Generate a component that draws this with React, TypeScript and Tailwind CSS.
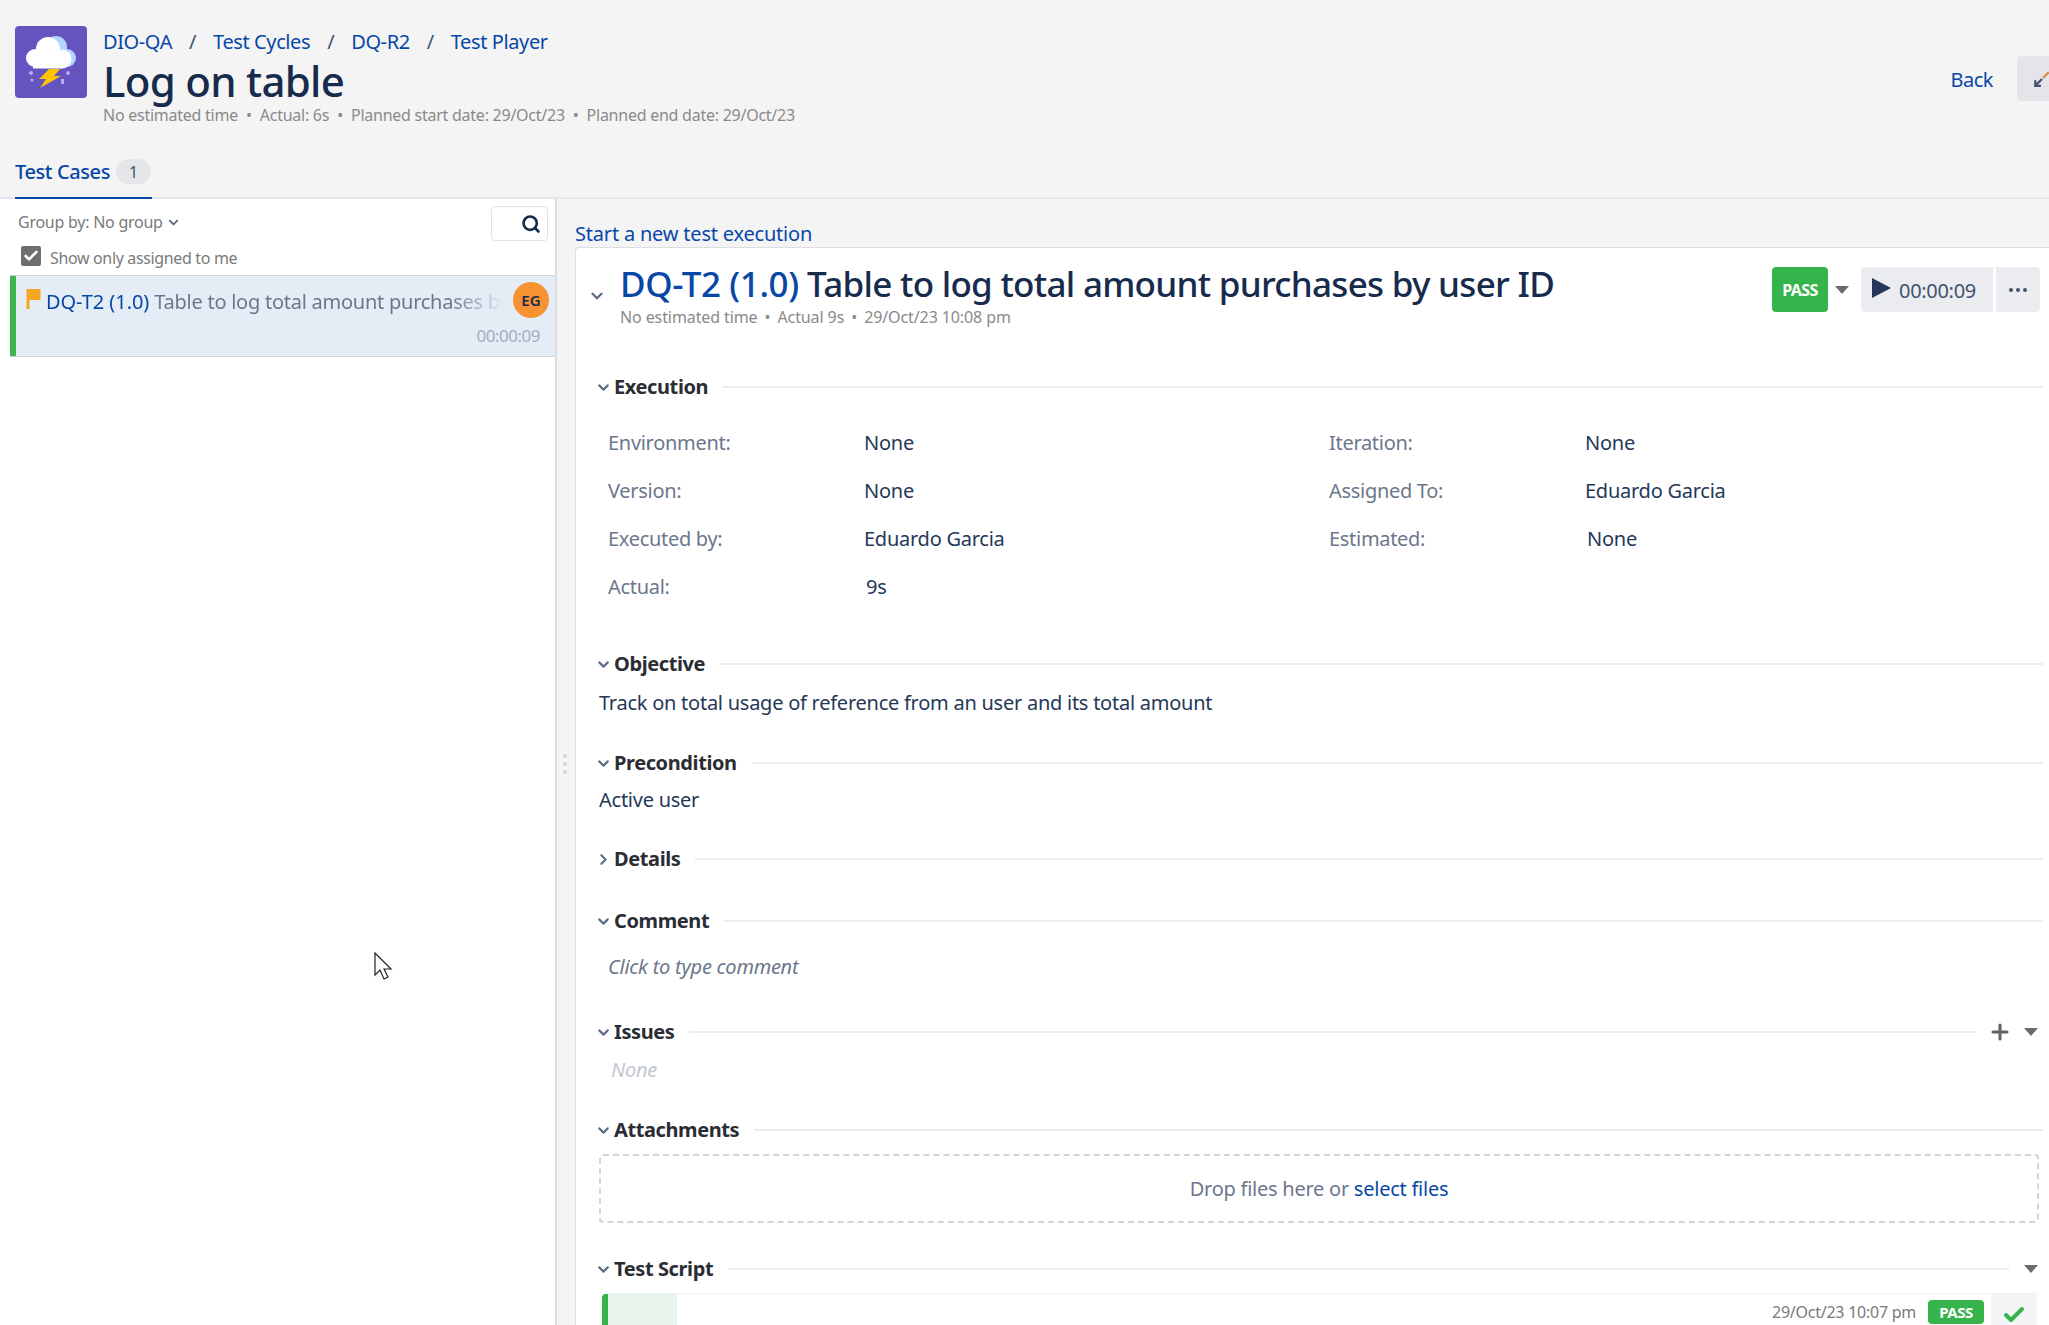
import { ChevronDown, ChevronRight, Plus, Search, Check } from "lucide-react";

const font = "font-['Noto_Sans','Open_Sans',sans-serif]";
const body = "text-[20px] leading-[26px] tracking-[-0.25px]";

function Logo() {
  return (
    <svg viewBox="0 0 72 72" className="h-[72px] w-[72px] shrink-0">
      <rect width="72" height="72" rx="4" fill="#6554c0" />
      <g fill="#b3d4ff">
        <circle cx="41" cy="21" r="11" />
        <circle cx="52" cy="32" r="9" />
      </g>
      <g fill="#ffffff">
        <circle cx="20" cy="32" r="9" />
        <circle cx="33" cy="23" r="12" />
        <circle cx="47" cy="33" r="9.500" />
        <rect x="18" y="30" width="30" height="12.500" />
      </g>
      <path d="M34 43h11l-6 7h7L25 62l6-9h-7z" fill="#ffc400" />
      <circle cx="16" cy="47" r="2" fill="#b8acf6" />
      <circle cx="17" cy="54" r="1.500" fill="#b8acf6" />
      <circle cx="53" cy="47" r="2" fill="#b8acf6" />
      <path d="M46 53h3v5h-3z" fill="#b8acf6" />
    </svg>
  );
}

function SectionHead({
  title,
  open = true,
  right,
}: {
  title: string;
  open?: boolean;
  right?: React.ReactNode;
}) {
  const Icon = open ? ChevronDown : ChevronRight;
  return (
    <div className="flex h-6 items-center">
      <Icon size={17} strokeWidth={3} className="-ml-[4px] shrink-0 text-[#5e6c84]" />
      <span className="ml-[2px] text-[20px] leading-6 font-bold tracking-[-0.4px] text-[#2a2d34]">{title}</span>
      <div className="ml-[15px] h-[2px] flex-1 bg-[#ebecf0]" />
      {right}
    </div>
  );
}

function Caret() {
  return <div className="h-0 w-0 border-x-[7px] border-t-[8px] border-x-transparent border-t-[#6b6b6b]" />;
}

function Field({ label, value, valueClass = "" }: { label: string; value: string; valueClass?: string }) {
  return (
    <div className="flex h-12 items-center">
      <span className="w-[256px] text-[20px] tracking-[-0.3px] text-[#6b778c]">{label}</span>
      <span className={`text-[20px] tracking-[-0.25px] text-[#253858] ${valueClass}`}>{value}</span>
    </div>
  );
}

export default function App() {
  return (
    <div className={`${font} flex h-screen w-full flex-col overflow-hidden bg-[#f4f4f5]`}>
      {/* header */}
      <header className="flex h-[199px] shrink-0 flex-col border-b-2 border-[#e6e7ea]">
        <div className="flex items-start pt-[26px] pl-[15px]">
          <Logo />
          <div className="ml-[16px] min-w-0 flex-1">
            <div className="flex h-[32px] items-center text-[20px] tracking-[-0.4px] text-[#0747a6]">
              <span>DIO-QA</span>
              <span className="mx-[17px] text-[#42526e]">/</span>
              <span>Test Cycles</span>
              <span className="mx-[17px] text-[#42526e]">/</span>
              <span>DQ-R2</span>
              <span className="mx-[17px] text-[#42526e]">/</span>
              <span>Test Player</span>
            </div>
            <h1 className="h-[46px] text-[42px] leading-[46px] font-medium tracking-[-0.7px] text-[#172b4d]">Log on table</h1>
            <div className="mt-[1px] flex items-center text-[16px] leading-5 tracking-[-0.25px] text-[#8a8a8a]">
              <span>No estimated time</span>
              <span className="mx-[8px]">•</span>
              <span>Actual: 6s</span>
              <span className="mx-[8px]">•</span>
              <span>Planned start date: 29/Oct/23</span>
              <span className="mx-[8px]">•</span>
              <span>Planned end date: 29/Oct/23</span>
            </div>
          </div>
          <div className="mt-[30px] -mr-[15px] flex items-center">
            <span className="mt-[2px] text-[20px] tracking-[-0.5px] text-[#0747a6]">Back</span>
            <div className="ml-6 flex h-[45px] w-[47px] items-center rounded-[4px] bg-[#e4e5e9] pl-[16px]">
              <svg viewBox="0 0 16 16" className="h-[18px] w-[18px]" fill="none" stroke="#42526e" strokeWidth="2">
                <path d="M8 8 2 14M2 9v5h5" />
                <path d="M9 7l5-5" stroke="#d98b4a" />
              </svg>
            </div>
          </div>
        </div>
        <div className="mt-[21px] flex">
          <div className="ml-[15px] flex h-[54px] w-[137px] items-start border-b-[3px] border-[#0747a6] pt-[13px]">
            <span className="text-[20px] leading-[26px] font-medium tracking-[-0.4px] text-[#0747a6]">Test Cases</span>
            <span className="ml-[6px] flex h-[25px] w-[35px] items-center justify-center rounded-full bg-[#e4e6ea] text-[16px] text-[#42526e]">1</span>
          </div>
        </div>
      </header>

      <div className="flex min-h-0 flex-1">
        {/* left panel */}
        <aside className="w-[557px] shrink-0 border-r-2 border-[#dcdcdc] bg-white">
          <div className="flex h-[76px]">
            <div className="flex-1 pt-[12px] pl-[18px]">
              <div className="flex h-[22px] items-center text-[16px] tracking-[-0.25px] text-[#7a7a7a]">
                Group by: No group
                <ChevronDown size={15} strokeWidth={3} className="ml-[3px] text-[#5e6c84]" />
              </div>
              <div className="mt-[10px] flex items-center pl-[3px]">
                <div className="flex h-5 w-5 items-center justify-center rounded-[2px] bg-[#6e6e6e]">
                  <Check size={16} strokeWidth={4} className="text-white" />
                </div>
                <span className="mt-[5px] ml-[9px] text-[16px] leading-5 tracking-[-0.35px] text-[#7a7a7a]">Show only assigned to me</span>
              </div>
            </div>
            <div className="mt-[7px] mr-[7px] flex h-[35px] w-[57px] items-center justify-end rounded-[4px] border border-[#dfe1e6] pr-[6px]">
              <Search size={20} strokeWidth={3.2} className="text-[#172b4d]" />
            </div>
          </div>
          <div className="ml-[10px] flex h-[82px] border-y border-[#cfd3d8] bg-[#e4ecf6]">
            <div className="w-[6px] bg-[#3db650]" />
            <div className="relative min-w-0 flex-1 pt-[12px] pl-[10px]">
              <div className="flex items-center">
                <svg viewBox="0 0 14 20" className="-mt-[6px] h-[20px] w-[15px] shrink-0">
                  <path d="M0 0h14v11H3v9H0z" fill="#f6a623" />
                </svg>
                <div className="ml-[5px] w-[458px] overflow-hidden text-[20px] leading-7 tracking-[-0.25px] whitespace-nowrap [mask-image:linear-gradient(to_right,black_88%,transparent_100%)]">
                  <span className="tracking-[-0.05px] text-[#0747a6]">DQ-T2 (1.0)</span>
                  <span className="text-[#6b778c]"> Table to log total amount purchases by user ID</span>
                </div>
              </div>
              <div className="absolute top-[6px] right-[6px] flex h-9 w-9 items-center justify-center rounded-full bg-[#f79232] text-[15px] font-semibold text-[#172b4d]">EG</div>
              <div className="absolute right-[15px] bottom-[8px] text-[17px] tracking-[-0.5px] text-[#a5adba]">00:00:09</div>
            </div>
          </div>
          {/* mouse pointer from the capture */}
          <svg viewBox="0 0 20 28" className="mt-[595px] ml-[374px] h-7 w-5">
            <path d="M1 1v22l5-5 4 9 4-2-4-8h7z" fill="#fff" stroke="#222" strokeWidth="1.200" />
          </svg>
        </aside>

        {/* splitter */}
        <div className="flex w-[18px] shrink-0 flex-col items-start pt-[555px] pl-[6px]">
          <div className="flex flex-col gap-[4px]">
            <div className="h-[4px] w-[4px] rounded-full bg-[#d4d6da]" />
            <div className="h-[4px] w-[4px] rounded-full bg-[#d4d6da]" />
            <div className="h-[4px] w-[4px] rounded-full bg-[#d4d6da]" />
          </div>
        </div>

        {/* main */}
        <main className="min-w-0 flex-1 pt-[21px]">
          <div className="h-[27px] text-[20px] leading-[27px] tracking-[-0.2px] text-[#0747a6]">Start a new test execution</div>
          <section className="h-[1200px] rounded-tl-[4px] border-t border-l border-[#dcdde0] bg-white pr-[6px] pl-[23px]">
            {/* title row */}
            <div className="flex h-[97px] items-start">
              <ChevronDown size={18} strokeWidth={3} className="mt-[39px] -ml-[11px] text-[#5e6c84]" />
              <div className="ml-[14px] pt-[12px]">
                <h2 className="text-[35px] leading-[48px] font-medium tracking-[-0.72px] text-[#172b4d]">
                  <span className="tracking-[-0.4px] text-[#0747a6]">DQ-T2 (1.0)</span> Table to log total amount purchases by user ID
                </h2>
                <div className="-mt-[1px] flex items-center text-[16px] leading-5 tracking-[-0.1px] text-[#8a8a8a]">
                  <span>No estimated time</span>
                  <span className="mx-[7px]">•</span>
                  <span>Actual 9s</span>
                  <span className="mx-[7px]">•</span>
                  <span>29/Oct/23 10:08 pm</span>
                </div>
              </div>
              <div className="mt-[19px] ml-auto flex items-center">
                <div className="flex h-[45px] w-[56px] items-center justify-center rounded-[4px] bg-[#36b44c] text-[16px] font-bold tracking-[-0.6px] text-white">PASS</div>
                <div className="mr-[12px] ml-[7px]">
                  <Caret />
                </div>
                <div className="flex h-[45px] w-[132px] items-center rounded-l-[4px] bg-[#ebecf0] pl-[11px]">
                  <svg viewBox="0 0 20 20" className="mb-[4px] h-5 w-5">
                    <path d="M0 0l19 10L0 20z" fill="#253858" />
                  </svg>
                  <span className="mt-[2px] ml-[7px] text-[20px] tracking-[-0.3px] text-[#42526e]">00:00:09</span>
                </div>
                <div className="mr-[3px] ml-[3px] flex h-[45px] w-[44px] items-center justify-center gap-[3px] rounded-r-[4px] bg-[#ebecf0]">
                  <span className="h-[4px] w-[4px] rounded-full bg-[#42526e]" />
                  <span className="h-[4px] w-[4px] rounded-full bg-[#42526e]" />
                  <span className="h-[4px] w-[4px] rounded-full bg-[#42526e]" />
                </div>
              </div>
            </div>

            <div className="mt-[30px]">
              <SectionHead title="Execution" />
            </div>
            <div className="mt-[20px] ml-[9px] grid grid-cols-[721px_1fr]">
              <Field label="Environment:" value="None" />
              <Field label="Iteration:" value="None" />
              <Field label="Version:" value="None" />
              <Field label="Assigned To:" value="Eduardo Garcia" />
              <Field label="Executed by:" value="Eduardo Garcia" />
              <Field label="Estimated:" value="None" valueClass="ml-[2px]" />
              <Field label="Actual:" value="9s" valueClass="ml-[2px]" />
            </div>

            <div className="mt-[41px]">
              <SectionHead title="Objective" />
            </div>
            <p className={`mt-[14px] h-[26px] ${body} text-[#253858]`}>
              Track on total usage of reference from an user and its total amount
            </p>

            <div className="mt-[35px]">
              <SectionHead title="Precondition" />
            </div>
            <p className={`mt-[12px] h-[26px] ${body} text-[#253858]`}>Active user</p>

            <div className="mt-[34px]">
              <SectionHead title="Details" open={false} />
            </div>

            <div className="mt-[38px]">
              <SectionHead title="Comment" />
            </div>
            <p className={`mt-[21px] ml-[9px] h-[26px] ${body} text-[#6b778c] italic`}>Click to type comment</p>

            <div className="mt-[40px]">
              <SectionHead
                title="Issues"
                right={
                  <div className="ml-[12px] flex items-center">
                    <Plus size={24} strokeWidth={3} className="text-[#5f6368]" />
                    <div className="mr-[5px] ml-[12px]">
                      <Caret />
                    </div>
                  </div>
                }
              />
            </div>
            <p className={`mt-[13px] ml-[12px] h-[26px] ${body} text-[#c1c7d0] italic`}>None</p>

            <div className="mt-[35px]">
              <SectionHead title="Attachments" />
            </div>
            <div className={`mt-[12px] mr-[4px] flex h-[69px] items-center justify-center rounded-[4px] border-2 border-dashed border-[#d3d4d6] ${body} text-[#6b778c]`}>
              Drop files here or&nbsp;<span className="text-[#0747a6]">select files</span>
            </div>

            <div className="mt-[34px]">
              <SectionHead
                title="Test Script"
                right={
                  <div className="mr-[5px] ml-[15px]">
                    <Caret />
                  </div>
                }
              />
            </div>
            <div className="mt-[12px] mr-[6px] ml-[3px] flex h-[60px] rounded-tl-[4px] border-t border-[#f0f1f3]">
              <div className="w-[6px] rounded-tl-[4px] bg-[#36b44c]" />
              <div className="w-[69px] bg-[#e9f5ec]" />
              <div className="ml-auto flex h-[22px] items-center pt-[14px]">
                <span className="text-[16px] tracking-[-0.25px] text-[#7a7a7a]">29/Oct/23 10:07 pm</span>
                <span className="ml-[12px] flex h-[24px] w-[56px] items-center justify-center rounded-[4px] bg-[#36b44c] text-[15px] font-bold tracking-[-0.5px] text-white">PASS</span>
              </div>
              <div className="ml-[7px] flex w-[46px] justify-center bg-[#f4f5f7] pt-[9px]">
                <Check size={24} strokeWidth={4} className="text-[#36b44c]" />
              </div>
            </div>
          </section>
        </main>
      </div>
    </div>
  );
}
